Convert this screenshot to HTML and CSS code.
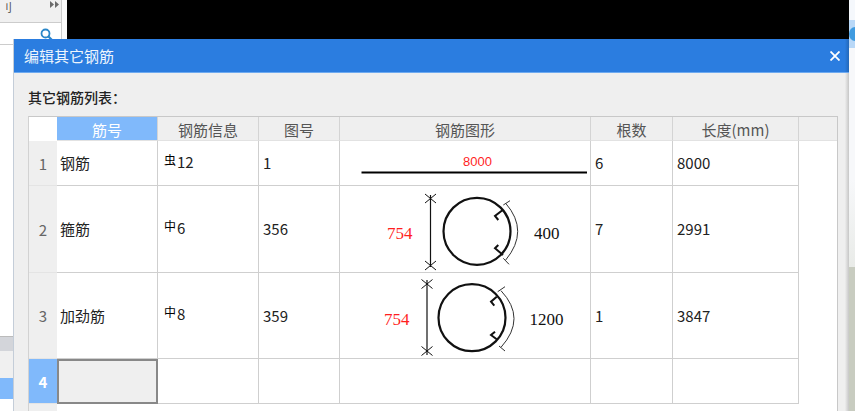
FILE: index.html
```html
<!DOCTYPE html>
<html lang="zh">
<head>
<meta charset="utf-8">
<title>编辑其它钢筋</title>
<link rel="stylesheet" href="styles.css">
</head>
<body>
<div class="backwin">
  <div class="bw-top">
    <span class="bw-label">刂</span>
    <svg class="bw-more" viewBox="0 0 9 7" width="9" height="7"><path d="M0 0l4 3.500-4 3.500zM5 0l4 3.500-4 3.500z" fill="#6b6b6b"/></svg>
  </div>
  <div class="bw-search">
    <svg class="bw-icon" viewBox="0 0 14 14" width="14" height="14"><circle cx="5.500" cy="5.500" r="4" fill="none" stroke="#2a86c8" stroke-width="1.800"/><path d="M8.500 8.500l4.500 4.500" stroke="#2a86c8" stroke-width="2.200"/></svg>
  </div>
  <div class="bw-gray"></div>
  <div class="bw-row"></div>
  <div class="bw-sel"></div>
</div>
<div class="rightwin">
  <div class="rw-white"></div>
  <div class="rw-blue"><span class="rw-dot"></span></div>
  <div class="rw-light"></div>
  <div class="rw-photo"></div>
</div>
<section class="dialog">
  <header class="titlebar">
    <span class="title">编辑其它钢筋</span>
    <svg class="close" viewBox="0 0 10 10" width="10" height="10"><path d="M0.500 0.500l9 9M9.500 0.500l-9 9" stroke="#fff" stroke-width="1.800"/></svg>
  </header>
  <div class="body">
    <div class="caption">其它钢筋列表：</div>
    <div class="grid">
      <div class="hc corner"></div>
      <div class="hc active">筋号</div>
      <div class="hc">钢筋信息</div>
      <div class="hc">图号</div>
      <div class="hc">钢筋图形</div>
      <div class="hc">根数</div>
      <div class="hc">长度(mm)</div>
      <div class="hc tail"></div>

      <div class="rh">1</div>
      <div class="c name">钢筋</div>
      <div class="c info"><span class="sym">虫</span>12</div>
      <div class="c">1</div>
      <div class="c fig">
        <svg viewBox="0 0 250 44" width="250" height="44">
          <text x="137.500" y="25" class="dim8000">8000</text>
          <path d="M21.500 31.500H247" stroke="#000" stroke-width="2"/>
        </svg>
      </div>
      <div class="c">6</div>
      <div class="c">8000</div>
      <div class="tailc"></div>

      <div class="rh">2</div>
      <div class="c name">箍筋</div>
      <div class="c info"><span class="sym">中</span>6</div>
      <div class="c">356</div>
      <div class="c fig">
        <svg viewBox="0 0 250 86" width="250" height="86">
          <text x="47" y="52.500" class="red">754</text>
          <path d="M90.500 9V81" stroke="#111" stroke-width="1.200"/>
          <path d="M85 8l11 9M85 17l11-9M85 75l11 9M85 84l11-9" stroke="#111"/>
          <circle cx="137" cy="45.300" r="33.500" fill="none" stroke="#111" stroke-width="2.200"/>
          <path d="M162.700 24l-7.700 6 3.300 4M163 69l-8-6.700 3.300-3.300" fill="none" stroke="#111" stroke-width="2"/>
          <path d="M165.700 17.300Q189.700 45 165.700 74" fill="none" stroke="#333"/>
          <path d="M163.300 19l6.700-4.300M163.300 72.300l5.700 6" stroke="#333"/>
          <text x="194" y="52.500" class="blk">400</text>
        </svg>
      </div>
      <div class="c">7</div>
      <div class="c">2991</div>
      <div class="tailc"></div>

      <div class="rh">3</div>
      <div class="c name">加劲筋</div>
      <div class="c info"><span class="sym">中</span>8</div>
      <div class="c">359</div>
      <div class="c fig">
        <svg viewBox="0 0 250 85" width="250" height="85">
          <text x="44" y="52" class="red">754</text>
          <path d="M87 7V82" stroke="#111" stroke-width="1.200"/>
          <path d="M81.500 6.500l11 9M81.500 15.500l11-9M81.500 73.500l11 9M81.500 82.500l11-9" stroke="#111"/>
          <circle cx="132" cy="44.700" r="33.500" fill="none" stroke="#111" stroke-width="2.200"/>
          <path d="M156.700 23.700l-5.700 5 3.300 4M156.700 66.300l-5.700-4.300 4-3.300" fill="none" stroke="#111" stroke-width="2"/>
          <path d="M161 17.700Q187 45.300 161 74.300" fill="none" stroke="#333"/>
          <path d="M157.700 18.700l7.300-5M159 73l6 5" stroke="#333"/>
          <text x="189.500" y="52" class="blk">1200</text>
        </svg>
      </div>
      <div class="c">1</div>
      <div class="c">3847</div>
      <div class="tailc"></div>

      <div class="rh current">4</div>
      <div class="c editing"></div>
      <div class="c"></div>
      <div class="c"></div>
      <div class="c"></div>
      <div class="c"></div>
      <div class="c"></div>
      <div class="tailc"></div>

      <div class="rh gutter"></div>
    </div>
  </div>
</section>
</body>
</html>
```
FILE: styles.css
```css
* { box-sizing: border-box; }
html, body { margin: 0; height: 100%; }
body {
  width: 855px; height: 411px; overflow: hidden; position: relative;
  background: #000;
  font-family: "Noto Sans CJK SC", "Noto Sans", sans-serif;
}
.backwin {
  position: absolute; left: 0; top: 0; width: 67px; height: 411px;
  background: #fff; border-right: 5px solid #fbfbfb;
}
.bw-top {
  height: 22px; background: #f0f0f0; display: flex; justify-content: space-between; align-items: flex-start;
  padding: 1px 2px 0 1px; font-size: 11px; line-height: 12px; color: #444; border-right: 1px solid #ccc;
}
.bw-more { display: block; }
.bw-search { height: 23px; border-top: 1px solid #ccc; border-bottom: 1px solid #ccc; border-right: 1px solid #ccc; position: relative; }
.bw-icon { position: absolute; left: 40px; top: 5px; }
.bw-gray { position: absolute; left: 0; top: 336px; width: 62px; height: 15px; background: #d3d5da; border-top: 1px solid #bbb; }
.bw-row { position: absolute; left: 0; top: 351px; width: 62px; height: 27px; background: #f0f0f0; }
.bw-sel { position: absolute; left: 0; top: 378px; width: 62px; height: 21px; background: #80b9fb; }
.rightwin { position: absolute; left: 849px; top: 0; width: 6px; height: 411px; display: flex; flex-direction: column; }
.rw-white { height: 20px; background: #f5f8fc; }
.rw-blue { height: 28px; background: #b9d8f7; position: relative; overflow: hidden; }
.rw-dot { position: absolute; left: 0; top: 7px; width: 12px; height: 14px; border-radius: 50%; background: #3f9be0; }
.rw-light { flex: 1; background: linear-gradient(#f7f8fa 60%, #e9ebe8); }
.rw-photo { height: 144px; background: #c8ccc0; }
.dialog {
  position: absolute; left: 13px; top: 39px; width: 836px; height: 372px;
  background: #efefef; border-left: 1px solid #c4cdd8;
  display: flex; flex-direction: column;
}
.titlebar {
  height: 34px; flex: none; background: linear-gradient(to right, #2b7de0 99.500%, #2468b8); border-bottom: 1px solid #6eaaf0;
  display: flex; align-items: center; justify-content: space-between; padding: 0 9px 0 10px;
}
.title { color: #eef5fd; font-size: 15px; line-height: 34px; }
.body {
  padding: 14px 0 0 14px; flex: 1; min-height: 0;
  background: linear-gradient(to right, #efefef 99.500%, #c6c6c6);
}
.caption { font-size: 14px; font-weight: 500; line-height: 20px; height: 29px; color: #222; }
.grid {
  display: grid;
  grid-template-columns: 28px 101px 101px 81px 251px 82px 126px 38px;
  grid-template-rows: 24px 45px 87px 86px 45px 1fr;
  width: 810px; height: 295px;
  background: #fff;
  border-top: 1px solid #c8c8c8; border-left: 1px solid #d2d2d2; border-right: 1px solid #c8c8c8;
  font-size: 15px; color: #222;
}
.hc {
  background: #efefef; color: #555; font-size: 15px; text-align: center; line-height: 25px;
  border-right: 1px solid #d4d4d4; border-bottom: 1px solid #e2e2e2;
}
.corner { background: #fff; border: 0; }
.active { background: #80b9fb; color: #fff; }
.tail { border-right: 0; }
.rh { background: #efefef; color: #666; display: flex; align-items: center; justify-content: center; border-bottom: 1px solid #e4e4e4; }
.gutter { border: 0; }
.c {
  background: #fff; border-right: 1px solid #cfcfcf; border-bottom: 1px solid #cfcfcf;
  display: flex; align-items: center; padding-left: 4px; line-height: 20px;
}
.name { padding-left: 3px; }
.info { padding-left: 6px; padding-bottom: 3px; }
.sym { font-size: 12px; margin-right: 1px; position: relative; top: -2px; color: #000; }
.fig { padding: 0; overflow: hidden; }
.fig svg { display: block; flex: none; }
.tailc { background: #fff; }
.current { background: #80b9fb; color: #fff; font-weight: 700; }
.editing { background: #efefef; border: 2px solid #888; }
.red { fill: #ff1f1f; font: 17px "Liberation Serif", serif; }
.blk { fill: #111; font: 17px "Liberation Serif", serif; }
.dim8000 { fill: #ff1f1f; font: 13px "Liberation Sans", sans-serif; text-anchor: middle; }
```
